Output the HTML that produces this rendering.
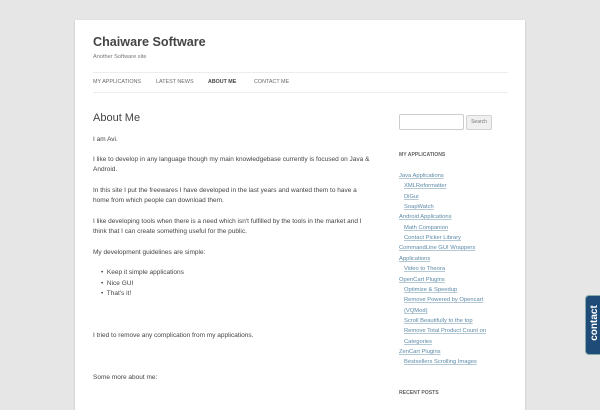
<!DOCTYPE html>
<html><head><meta charset="utf-8"><style>
body{margin:0;background:#e6e6e6;width:600px;height:400px;overflow:hidden;font-family:"Liberation Sans",sans-serif;color:#444;}
#page{position:absolute;left:75px;top:20px;width:450px;height:390px;background:#fff;box-shadow:0 1px 2px rgba(0,0,0,.2);}
.t{position:absolute;white-space:nowrap;font-size:6.5px;line-height:10px;}
.l{color:#5c8aa8;text-decoration:underline;text-decoration-color:#b5c8d5;}
.hr{position:absolute;height:1px;background:#ededed;}
</style></head><body>
<div id="page"></div>
<div class="t" style="left:93px;top:34px;font-size:12.6px;line-height:16px;font-weight:bold;color:#444">Chaiware Software</div>
<div class="t" style="left:93px;top:52px;color:#757575;font-size:5.6px">Another Software site</div>
<div class="hr" style="left:93px;top:72px;width:415px"></div>
<div class="t" style="left:93px;top:77px;color:#6a6a6a;font-size:5.4px">MY APPLICATIONS</div>
<div class="t" style="left:156px;top:77px;color:#6a6a6a;font-size:5.4px">LATEST NEWS</div>
<div class="t" style="left:208px;top:77px;color:#444;font-size:5.3px;font-weight:bold">ABOUT ME</div>
<div class="t" style="left:254px;top:77px;color:#6a6a6a;font-size:5.4px">CONTACT ME</div>
<div class="hr" style="left:93px;top:92px;width:415px"></div>
<div class="t" style="left:93px;top:111px;font-size:11px;line-height:14px;color:#444">About Me</div>
<div class="t" style="left:93px;top:135px">I am Avi.</div>
<div class="t" style="left:93px;top:155px">I like to develop in any language though my main knowledgebase currently is focused on Java &amp;</div>
<div class="t" style="left:93px;top:165px">Android.</div>
<div class="t" style="left:93px;top:186px">In this site I put the freewares I have developed in the last years and wanted them to have a</div>
<div class="t" style="left:93px;top:196px">home from which people can download them.</div>
<div class="t" style="left:93px;top:217px">I like developing tools when there is a need which isn't fulfilled by the tools in the market and I</div>
<div class="t" style="left:93px;top:227px">think that I can create something useful for the public.</div>
<div class="t" style="left:93px;top:248px">My development guidelines are simple:</div>
<div class="t" style="left:101px;top:268px">•&nbsp; Keep it simple applications</div>
<div class="t" style="left:101px;top:279px">•&nbsp; Nice GUI</div>
<div class="t" style="left:101px;top:289px">•&nbsp; That's it!</div>
<div class="t" style="left:93px;top:331px">I tried to remove any complication from my applications.</div>
<div class="t" style="left:93px;top:373px">Some more about me:</div>
<div style="position:absolute;left:399px;top:114px;width:63px;height:14px;border:1px solid #ccc;border-radius:2px;background:#fff"></div>
<div style="position:absolute;left:466px;top:115px;width:24px;height:13px;border:1px solid #d2d2d2;border-radius:2px;background:#f0f0f0;font-size:5px;line-height:13px;text-align:center;color:#777">Search</div>
<div class="t" style="left:399px;top:150px;font-size:5.1px;font-weight:bold;color:#636363">MY APPLICATIONS</div>
<div class="t l" style="left:399px;top:171px;font-size:5.8px">Java Applications</div>
<div class="t l" style="left:404px;top:181px;font-size:5.8px">XMLReformatter</div>
<div class="t l" style="left:404px;top:192px;font-size:5.8px">DiGui</div>
<div class="t l" style="left:404px;top:202px;font-size:5.8px">SoapWatch</div>
<div class="t l" style="left:399px;top:212px;font-size:5.8px">Android Applications</div>
<div class="t l" style="left:404px;top:223px;font-size:5.8px">Math Companion</div>
<div class="t l" style="left:404px;top:233px;font-size:5.8px">Contact Picker Library</div>
<div class="t l" style="left:399px;top:243px;font-size:5.8px">CommandLine GUI Wrappers</div>
<div class="t l" style="left:399px;top:254px;font-size:5.8px">Applications</div>
<div class="t l" style="left:404px;top:264px;font-size:5.8px">Video to Theora</div>
<div class="t l" style="left:399px;top:275px;font-size:5.8px">OpenCart Plugins</div>
<div class="t l" style="left:404px;top:285px;font-size:5.8px">Optimize &amp; Speedup</div>
<div class="t l" style="left:404px;top:295px;font-size:5.8px">Remove Powered by Opencart</div>
<div class="t l" style="left:404px;top:306px;font-size:5.8px">(VQMod)</div>
<div class="t l" style="left:404px;top:316px;font-size:5.8px">Scroll Beautifully to the top</div>
<div class="t l" style="left:404px;top:326px;font-size:5.8px">Remove Total Product Count on</div>
<div class="t l" style="left:404px;top:337px;font-size:5.8px">Categories</div>
<div class="t l" style="left:399px;top:347px;font-size:5.8px">ZenCart Plugins</div>
<div class="t l" style="left:404px;top:357px;font-size:5.8px">Bestsellers Scrolling Images</div>
<div class="t" style="left:399px;top:388px;font-size:5.1px;font-weight:bold;color:#636363">RECENT POSTS</div>
<div style="position:absolute;left:585px;top:295px;width:20px;height:58px;background:#1e4b78;border-radius:4px 0 0 4px;border:1px solid #8aa;"></div>
<div style="position:absolute;left:566px;top:316px;width:58px;height:14px;transform:rotate(-90deg);color:#fff;font-weight:bold;font-size:10px;line-height:14px;text-align:center">contact</div>
</body></html>
